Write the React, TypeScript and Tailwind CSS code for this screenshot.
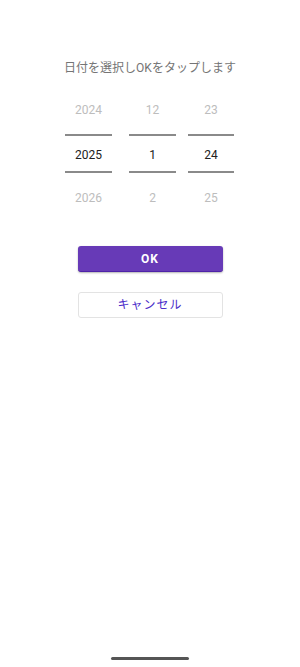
import React from "react";

const cols = [
  { w: "w-[47px]", ml: "ml-[0px]", vals: ["2024", "2025", "2026"] },
  { w: "w-[47px]", ml: "ml-[17px]", vals: ["12", "1", "2"] },
  { w: "w-[46px]", ml: "ml-[12px]", vals: ["23", "24", "25"] },
];

export default function App() {
  return (
    <div
      className="h-[667px] w-[300px] bg-white flex flex-col items-center"
      style={{ fontFamily: "Roboto, 'Noto Sans CJK JP', sans-serif" }}
    >
      <div className="pt-[59px] text-[12px] leading-[18px] text-[#757575]">
        日付を選択しOKをタップします
      </div>
      <div className="mt-[15px] flex self-start pl-[65px]">
        {cols.map((c, i) => (
          <div key={i} className={`${c.w} ${c.ml} flex flex-col`}>
            <div className="h-[36px] flex items-center justify-center text-[12px] text-[#bdbdbd]">
              {c.vals[0]}
            </div>
            <div className="mt-[6px] h-[2px] bg-[#8a8a8a]" />
            <div className="h-[35px] pt-[3px] flex items-center justify-center text-[12px] text-[#212121]">
              {c.vals[1]}
            </div>
            <div className="h-[2px] bg-[#8a8a8a]" />
            <div className="h-[49px] flex items-center justify-center text-[12px] text-[#bdbdbd]">
              {c.vals[2]}
            </div>
          </div>
        ))}
      </div>
      <button className="mt-[24px] w-[145px] h-[26px] rounded-[3px] bg-[#673ab7] border-b border-[#4f23a8] shadow-[0_1px_2px_rgba(0,0,0,0.3)] text-white text-[12px] font-bold tracking-[1px] flex items-center justify-center">
        OK
      </button>
      <button className="mt-[20px] w-[145px] h-[26px] rounded-[3px] bg-white border border-[#e3e3e3] text-[#4a2dc9] text-[12px] tracking-[1px] flex items-center justify-center">
        キャンセル
      </button>
      <div className="flex-1" />
      <div className="mb-[7px] h-[3px] w-[78px] rounded-full bg-[#555555]" />
    </div>
  );
}
